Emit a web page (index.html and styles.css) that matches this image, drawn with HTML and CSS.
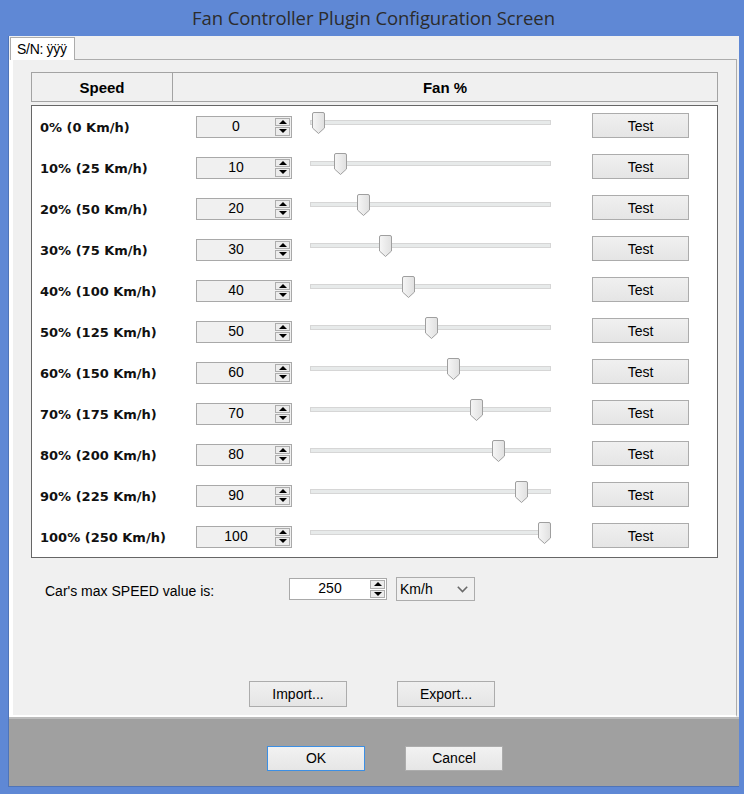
FILE: index.html
```html
<!DOCTYPE html>
<html>
<head>
<meta charset="utf-8">
<link rel="stylesheet" href="styles.css">
</head>
<body>
<svg width="0" height="0" class="defs">
  <defs>
    <linearGradient id="tg" x1="0" y1="0" x2="1" y2="0">
      <stop offset="0" stop-color="#f6f6f6"/>
      <stop offset="1" stop-color="#e0e0e0"/>
    </linearGradient>
    <symbol id="thumb" viewBox="0 0 13 22">
      <path d="M2 0.5 H11 Q12.5 0.5 12.5 2 V16 L6.5 21.5 L0.5 16 V2 Q0.5 0.5 2 0.5 Z" fill="url(#tg)" stroke="#9f9f9f" stroke-width="1"/>
    </symbol>
  </defs>
</svg>
<div class="window">
  <div class="titlebar">Fan Controller Plugin Configuration Screen</div>
  <div class="client">
    <div class="tabarea">
      <div class="tabstrip"><div class="tab">S/N: ÿÿÿ</div></div>
      <div class="tabpage">
        <div class="header">
          <div class="hcell hspeed">Speed</div>
          <div class="hcell hfan">Fan %</div>
        </div>
        <div class="grid">
          <div class="row"><div class="lbl">0% (0 Km/h)</div><div class="spin"><span class="spin-val">0</span><span class="spin-btns"><span class="sb up"></span><span class="sb down"></span></span></div><div class="slider"><div class="track"></div><svg class="thumb" style="left:1.5px" viewBox="0 0 13 22"><use href="#thumb"/></svg></div><div class="btn test">Test</div></div>
          <div class="row"><div class="lbl">10% (25 Km/h)</div><div class="spin"><span class="spin-val">10</span><span class="spin-btns"><span class="sb up"></span><span class="sb down"></span></span></div><div class="slider"><div class="track"></div><svg class="thumb" style="left:24.1px" viewBox="0 0 13 22"><use href="#thumb"/></svg></div><div class="btn test">Test</div></div>
          <div class="row"><div class="lbl">20% (50 Km/h)</div><div class="spin"><span class="spin-val">20</span><span class="spin-btns"><span class="sb up"></span><span class="sb down"></span></span></div><div class="slider"><div class="track"></div><svg class="thumb" style="left:46.7px" viewBox="0 0 13 22"><use href="#thumb"/></svg></div><div class="btn test">Test</div></div>
          <div class="row"><div class="lbl">30% (75 Km/h)</div><div class="spin"><span class="spin-val">30</span><span class="spin-btns"><span class="sb up"></span><span class="sb down"></span></span></div><div class="slider"><div class="track"></div><svg class="thumb" style="left:69.3px" viewBox="0 0 13 22"><use href="#thumb"/></svg></div><div class="btn test">Test</div></div>
          <div class="row"><div class="lbl">40% (100 Km/h)</div><div class="spin"><span class="spin-val">40</span><span class="spin-btns"><span class="sb up"></span><span class="sb down"></span></span></div><div class="slider"><div class="track"></div><svg class="thumb" style="left:91.9px" viewBox="0 0 13 22"><use href="#thumb"/></svg></div><div class="btn test">Test</div></div>
          <div class="row"><div class="lbl">50% (125 Km/h)</div><div class="spin"><span class="spin-val">50</span><span class="spin-btns"><span class="sb up"></span><span class="sb down"></span></span></div><div class="slider"><div class="track"></div><svg class="thumb" style="left:114.5px" viewBox="0 0 13 22"><use href="#thumb"/></svg></div><div class="btn test">Test</div></div>
          <div class="row"><div class="lbl">60% (150 Km/h)</div><div class="spin"><span class="spin-val">60</span><span class="spin-btns"><span class="sb up"></span><span class="sb down"></span></span></div><div class="slider"><div class="track"></div><svg class="thumb" style="left:137.1px" viewBox="0 0 13 22"><use href="#thumb"/></svg></div><div class="btn test">Test</div></div>
          <div class="row"><div class="lbl">70% (175 Km/h)</div><div class="spin"><span class="spin-val">70</span><span class="spin-btns"><span class="sb up"></span><span class="sb down"></span></span></div><div class="slider"><div class="track"></div><svg class="thumb" style="left:159.7px" viewBox="0 0 13 22"><use href="#thumb"/></svg></div><div class="btn test">Test</div></div>
          <div class="row"><div class="lbl">80% (200 Km/h)</div><div class="spin"><span class="spin-val">80</span><span class="spin-btns"><span class="sb up"></span><span class="sb down"></span></span></div><div class="slider"><div class="track"></div><svg class="thumb" style="left:182.3px" viewBox="0 0 13 22"><use href="#thumb"/></svg></div><div class="btn test">Test</div></div>
          <div class="row"><div class="lbl">90% (225 Km/h)</div><div class="spin"><span class="spin-val">90</span><span class="spin-btns"><span class="sb up"></span><span class="sb down"></span></span></div><div class="slider"><div class="track"></div><svg class="thumb" style="left:204.9px" viewBox="0 0 13 22"><use href="#thumb"/></svg></div><div class="btn test">Test</div></div>
          <div class="row"><div class="lbl">100% (250 Km/h)</div><div class="spin"><span class="spin-val">100</span><span class="spin-btns"><span class="sb up"></span><span class="sb down"></span></span></div><div class="slider"><div class="track"></div><svg class="thumb" style="left:227.5px" viewBox="0 0 13 22"><use href="#thumb"/></svg></div><div class="btn test">Test</div></div>
        </div>
        <div class="maxrow">
          <div class="maxlbl">Car's max SPEED value is:</div>
          <div class="spin spin-white"><span class="spin-val">250</span><span class="spin-btns"><span class="sb up"></span><span class="sb down"></span></span></div>
          <div class="combo"><span>Km/h</span><svg class="chev" width="11" height="7" viewBox="0 0 11 7"><polyline points="0.8,0.8 5.5,5.5 10.2,0.8" fill="none" stroke="#6a6a6a" stroke-width="1.6"/></svg></div>
        </div>
        <div class="iorow">
          <div class="btn io">Import...</div>
          <div class="btn io">Export...</div>
        </div>
      </div>
    </div>
    <div class="buttonbar">
      <div class="btn dlg ok">OK</div>
      <div class="btn dlg">Cancel</div>
    </div>
  </div>
</div>
</body>
</html>
```

FILE: styles.css
```css
html, body {
  margin: 0;
  padding: 0;
}
body {
  width: 744px;
  height: 794px;
  background: #5f88d5;
  font-family: "Liberation Sans", Arial, sans-serif;
  font-size: 14px;
  color: #000;
  overflow: hidden;
}
.defs {
  position: absolute;
  width: 0;
  height: 0;
}
.window {
  width: 744px;
  height: 794px;
  display: flex;
  flex-direction: column;
  box-sizing: border-box;
  padding: 0 5px 7px 8px;
}
.titlebar {
  height: 36px;
  line-height: 36px;
  text-align: center;
  font-family: "Open Sans", "Noto Sans", sans-serif;
  font-size: 18.5px;
  letter-spacing: -0.1px;
  color: #2c2c2c;
  margin-right: -5px;
  margin-left: -8px;
  padding-left: 3px;
}
.client {
  flex: 1;
  display: flex;
  flex-direction: column;
  background: #f0f0f0;
  border-left: 1px solid #4f74b8;
  border-bottom: 1px solid #4f74b8;
}
.tabarea {
  flex: 1;
  display: flex;
  flex-direction: column;
  background: #f0f0f0;
}
.tabstrip {
  height: 23px;
  display: flex;
  align-items: flex-end;
}
.tab {
  position: relative;
  z-index: 1;
  margin-left: 1px;
  margin-bottom: -1px;
  width: 65px;
  height: 23px;
  box-sizing: border-box;
  background: #fff;
  border: 1px solid #acacac;
  border-bottom: none;
  padding-left: 6px;
  line-height: 22px;
  font-size: 14px;
  letter-spacing: -0.3px;
}
.tabpage {
  flex: 1;
  display: flex;
  flex-direction: column;
  background: #f0f0f0;
  border-top: 1px solid #acacac;
  border-right: 1px solid #acacac;
  border-left: 4px solid #fff;
  border-bottom: 2px solid #fff;
  margin-right: 2px;
}
.header {
  display: flex;
  margin: 12px 18px 0 18px;
  height: 30px;
  box-sizing: border-box;
  border: 1px solid #a3a3a3;
  background: #f0f0f0;
  font-weight: bold;
  font-size: 15px;
}
.hcell {
  display: flex;
  align-items: center;
  justify-content: center;
}
.hspeed {
  width: 140px;
  border-right: 1px solid #a3a3a3;
}
.hfan {
  flex: 1;
}
.grid {
  margin: 3px 18px 0 18px;
  border: 1px solid #666;
  background: #fff;
}
.row {
  height: 41px;
  display: grid;
  grid-template-columns: 156px 96px 259px 138px;
  align-items: center;
  padding-left: 8px;
}
.lbl {
  font-family: "DejaVu Sans", Verdana, sans-serif;
  font-weight: bold;
  font-size: 13px;
  color: #111;
  padding-top: 2px;
}
.spin {
  display: flex;
  width: 96px;
  height: 22px;
  box-sizing: border-box;
  border: 1px solid #a9a9a9;
  background: #f0f0f0;
}
.spin-white {
  background: #fff;
  width: 98px;
}
.spin-val {
  flex: 1;
  text-align: center;
  line-height: 19px;
  font-size: 14px;
}
.spin-btns {
  width: 16px;
  display: flex;
  flex-direction: column;
  padding: 1px 1px 1px 0;
  gap: 1px;
  box-sizing: border-box;
}
.sb {
  flex: 1;
  position: relative;
  border: 1px solid #adadad;
  background: #ececec;
}
.sb::after {
  content: "";
  position: absolute;
  left: 50%;
  top: 50%;
  margin-left: -4px;
  border-left: 4px solid transparent;
  border-right: 4px solid transparent;
}
.sb.up::after {
  margin-top: -2px;
  border-bottom: 4px solid #000;
}
.sb.down::after {
  margin-top: -2px;
  border-top: 4px solid #000;
}
.slider {
  position: relative;
  align-self: start;
  margin-top: 6px;
  margin-left: 18px;
  width: 241px;
  height: 22px;
}
.track {
  position: absolute;
  left: 0;
  right: 0;
  top: 8px;
  height: 5px;
  box-sizing: border-box;
  background: #e7eaea;
  border: 1px solid #d6d6d6;
}
.thumb {
  position: absolute;
  top: 0;
  width: 13px;
  height: 22px;
}
.btn {
  box-sizing: border-box;
  border: 1px solid #acacac;
  background: linear-gradient(#f0f0f0, #e5e5e5);
  text-align: center;
  font-size: 14px;
}
.test {
  width: 97px;
  height: 25px;
  line-height: 24px;
  margin-left: 41px;
  align-self: start;
  margin-top: 7px;
}
.maxrow {
  display: flex;
  align-items: center;
  margin-top: 19px;
  height: 24px;
  padding-left: 32px;
}
.maxlbl {
  width: 244px;
  font-size: 14px;
  padding-top: 3px;
}
.combo {
  margin-left: 9px;
  width: 79px;
  height: 24px;
  box-sizing: border-box;
  border: 1px solid #acacac;
  background: #f0f0f0;
  display: flex;
  align-items: center;
  justify-content: space-between;
  padding: 0 6px 0 3px;
  font-size: 14px;
}
.chev {
  margin-top: 1px;
}
.iorow {
  display: flex;
  margin-top: 80px;
  padding-left: 236px;
  gap: 50px;
}
.io {
  width: 98px;
  height: 26px;
  line-height: 24px;
}
.buttonbar {
  height: 69px;
  box-sizing: border-box;
  background: #a0a0a0;
  border-top: 2px solid #bcbcbc;
  display: flex;
  padding: 27px 0 0 258px;
  gap: 40px;
  align-items: flex-start;
}
.dlg {
  width: 98px;
  height: 25px;
  line-height: 23px;
  background: linear-gradient(#f2f2f2, #e6e6e6);
}
.ok {
  border-color: #3c8fe4;
}
```
